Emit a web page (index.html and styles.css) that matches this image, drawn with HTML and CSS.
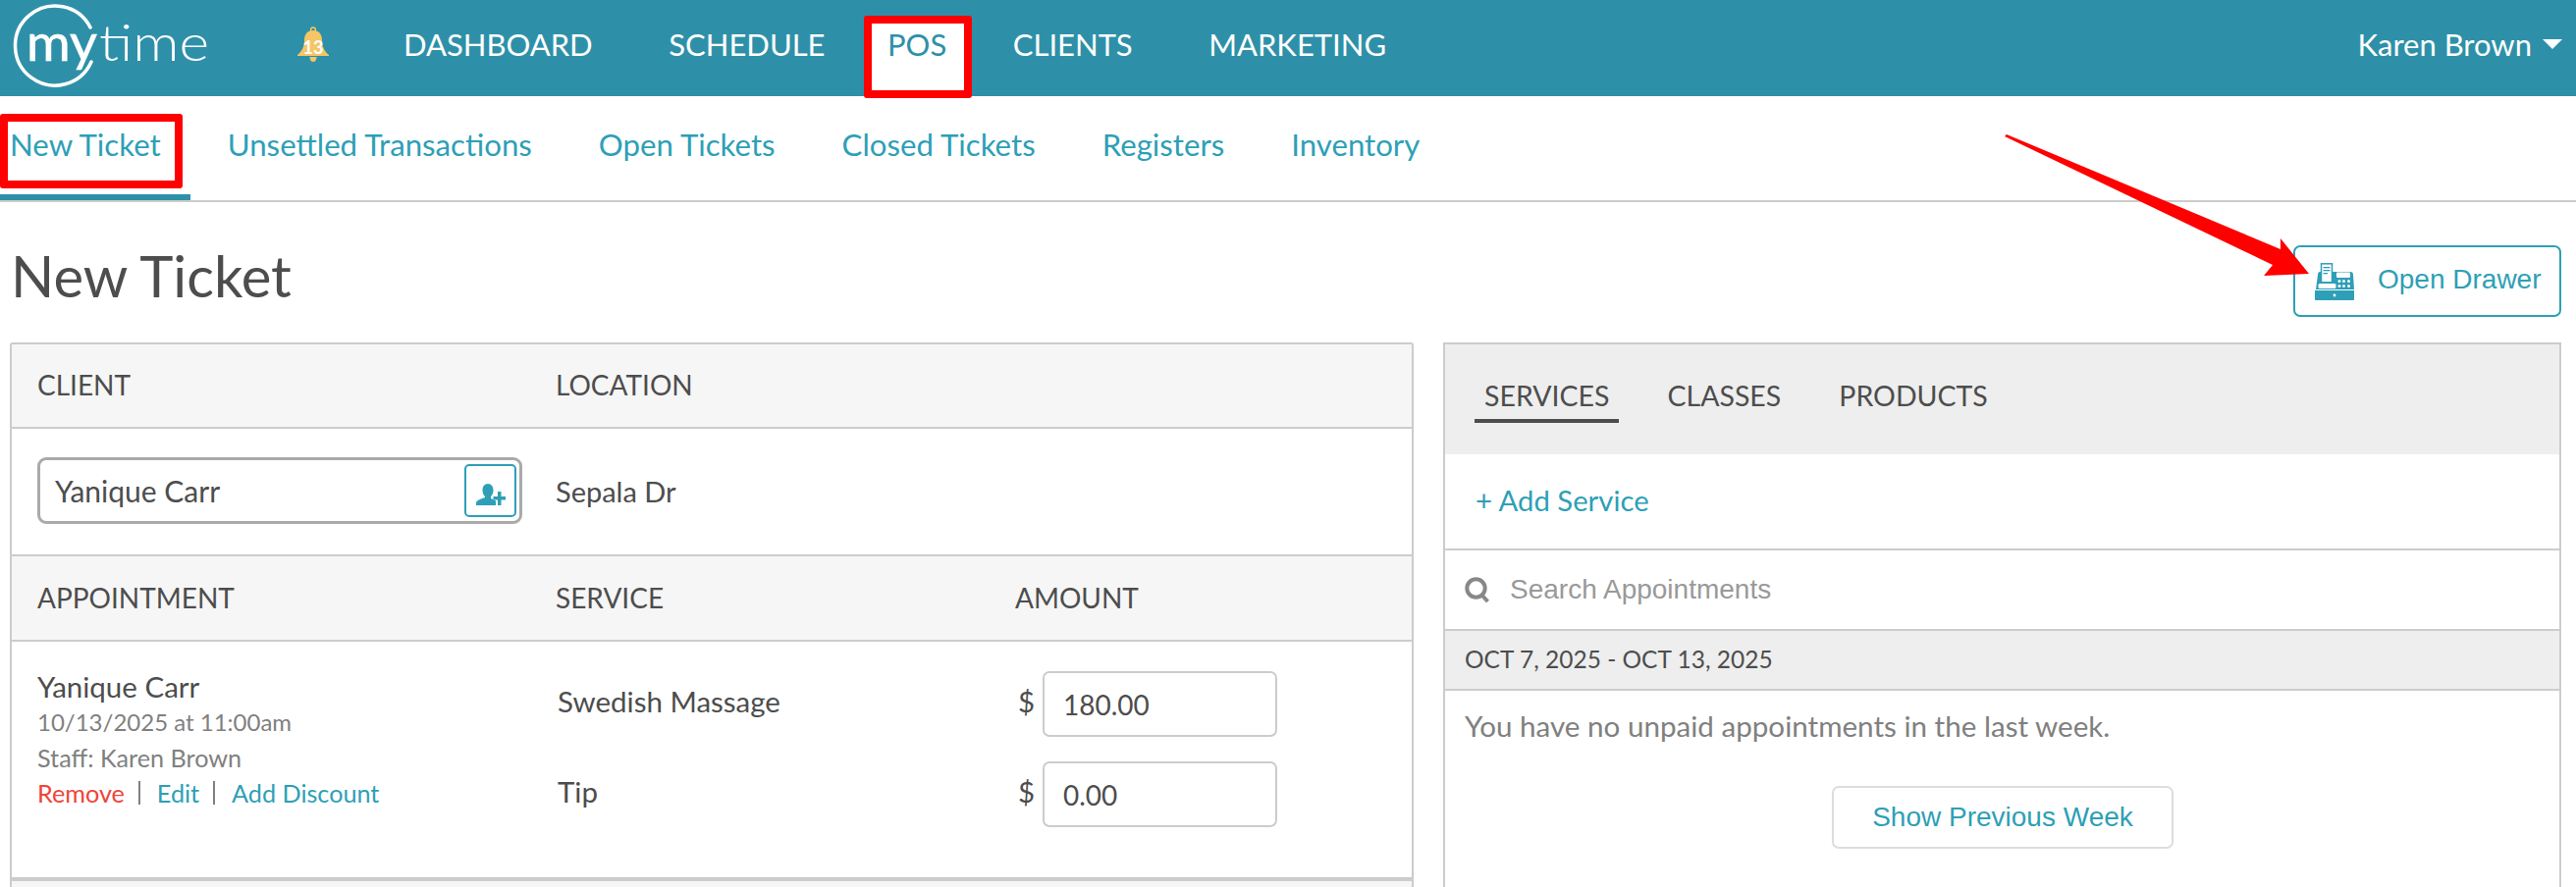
FILE: index.html
```html
<!DOCTYPE html>
<html lang="en">
<head>
<meta charset="utf-8">
<title>New Ticket</title>
<link rel="stylesheet" href="styles.css">
</head>
<body>
<header class="topbar">
  <svg class="logo" viewBox="0 0 216 92" aria-label="mytime">
    <path class="logo-arc" d="M92 25 A40.5 40.5 0 1 0 93 60"/>
    <text class="logo-text logo-my" x="27" y="59" textLength="72" lengthAdjust="spacingAndGlyphs">my</text>
    <text class="logo-text" x="101" y="59" textLength="112" lengthAdjust="spacingAndGlyphs">time</text>
  </svg>
  <div class="bell">
    <svg class="bell-icon" viewBox="0 0 32 36"><circle class="bell-ring" cx="16" cy="3.5" r="2.4"/><path class="bell-body" d="M16 4c6 0 9 4 9 10 0 6 2 11 7 15v1H0v-1c5-4 7-9 7-15C7 8 10 4 16 4z"/><path class="bell-body" d="M12.5 31h7c0 3-1.500 5-3.500 5s-3.500-2-3.500-5z"/></svg>
    <span class="bell-count">13</span>
  </div>
  <nav class="mainnav">
    <a class="mainnav-item">DASHBOARD</a>
    <a class="mainnav-item">SCHEDULE</a>
    <a class="mainnav-item mainnav-active">POS</a>
    <a class="mainnav-item">CLIENTS</a>
    <a class="mainnav-item">MARKETING</a>
  </nav>
  <div class="user">Karen Brown<span class="caret"></span></div>
</header>

<nav class="subnav">
  <a class="subnav-item subnav-active">New Ticket</a>
  <a class="subnav-item">Unsettled Transactions</a>
  <a class="subnav-item">Open Tickets</a>
  <a class="subnav-item">Closed Tickets</a>
  <a class="subnav-item">Registers</a>
  <a class="subnav-item">Inventory</a>
</nav>

<div class="pagehead">
  <h1 class="pagetitle">New Ticket</h1>
  <button class="drawer-btn">
    <svg class="drawer-icon" viewBox="0 0 40 38">
      <path class="teal-fill" d="M5 9h17v-0h14c2 0 3 1 3 3l1 15H1L3 12c0-2 1-3 2-3z"/>
      <rect x="6.500" y="0.800" width="11" height="19" class="paper"/>
      <rect x="8.500" y="4" width="7" height="1.300" class="teal-fill"/>
      <rect x="8.500" y="7" width="7" height="1.300" class="teal-fill"/>
      <rect x="8.500" y="10" width="4.500" height="1.300" class="teal-fill"/>
      <rect x="22" y="9.500" width="14" height="5.500" rx="1" class="white-fill"/>
      <rect x="3.500" y="21" width="18" height="5" rx="1.500" class="white-fill"/>
      <g class="white-fill">
        <circle cx="25" cy="18.500" r="1.500"/><circle cx="29.500" cy="18.500" r="1.500"/><circle cx="34.500" cy="18.500" r="1.500"/>
        <circle cx="25" cy="23.500" r="1.500"/><circle cx="29.500" cy="23.500" r="1.500"/><circle cx="34.500" cy="23.500" r="1.500"/>
      </g>
      <path class="teal-fill" d="M0 28h40v9c0 .6-.4 1-1 1H1c-.6 0-1-.4-1-1z"/>
      <circle cx="20" cy="33" r="1.400" class="white-fill"/>
    </svg>
    <span>Open Drawer</span>
  </button>
</div>

<main class="panels">
  <section class="panel ticket">
    <div class="grid-row head-row">
      <div>CLIENT</div>
      <div>LOCATION</div>
    </div>
    <div class="grid-row client-row">
      <div class="client-field">
        <input class="client-input" value="Yanique Carr">
        <button class="add-client">
          <svg class="add-client-icon" viewBox="0 0 30 22">
            <path class="teal-fill" d="M12 0c3.500 0 5.500 3 5.500 6.500 0 3-1 5-2.500 6.500v2c2 .8 3.500 1.500 5 2.500V22H0v-3c1-2 4-3.500 9-5v-1C7.500 11.500 6.500 9.500 6.500 6.500 6.500 3 8.500 0 12 0z"/>
            <path class="teal-fill" d="M22 8h3.500v5H30v3.500h-4.500V22H22v-5.500h-4.500V13H22z"/>
          </svg>
        </button>
      </div>
      <div class="body-text">Sepala Dr</div>
    </div>
    <div class="grid-row head-row head-row-second">
      <div>APPOINTMENT</div>
      <div>SERVICE</div>
      <div>AMOUNT</div>
    </div>
    <div class="grid-row item-row">
      <div class="appt">
        <div class="appt-name">Yanique Carr</div>
        <div class="appt-date">10/13/2025 at 11:00am</div>
        <div class="appt-staff">Staff: Karen Brown</div>
        <div class="appt-actions"><a class="link-remove">Remove</a><span class="sep"></span><a class="link">Edit</a><span class="sep"></span><a class="link">Add Discount</a></div>
      </div>
      <div class="lines service-lines">
        <div class="line">Swedish Massage</div>
        <div class="line">Tip</div>
      </div>
      <div class="lines">
        <div class="line"><span class="dollar">$</span><input class="amount" value="180.00"></div>
        <div class="line"><span class="dollar">$</span><input class="amount" value="0.00"></div>
      </div>
    </div>
    <div class="ticket-foot"></div>
  </section>

  <section class="panel catalog">
    <div class="tabs">
      <a class="tab tab-active">SERVICES</a>
      <a class="tab">CLASSES</a>
      <a class="tab">PRODUCTS</a>
    </div>
    <div class="add-row"><a class="add-link">+ Add Service</a></div>
    <div class="search-row">
      <svg class="search-icon" viewBox="0 0 26 26"><circle cx="11.500" cy="11.500" r="9.200"/><path d="M17.500 18.500l6 6.500"/></svg>
      <input class="search-input" placeholder="Search Appointments">
    </div>
    <div class="date-row">OCT 7, 2025 - OCT 13, 2025</div>
    <p class="empty">You have no unpaid appointments in the last week.</p>
    <div class="more-wrap"><button class="more-btn">Show Previous Week</button></div>
  </section>
</main>

<div class="mark mark-ticket"></div>
<svg class="arrow" viewBox="0 0 320 150"><polygon points="0,0 2,-2 281,115 281,104 310,140 264,142 273,131" transform="translate(2 3)"/></svg>
</body>
</html>
```
FILE: styles.css
```css
*, *::before, *::after { box-sizing: border-box; }
html, body { margin: 0; height: 904px; overflow: hidden; background: #fff; }
body { font-family: Lato, "Noto Sans", sans-serif; color: #4d4d4d; position: relative; }
a { text-decoration: none; }
input, button { font-family: inherit; color: inherit; background: #fff; margin: 0; outline: none; }

.teal-fill { fill: #2e9fb6; }
.white-fill { fill: #fff; }
.paper { fill: #fff; stroke: #2e9fb6; stroke-width: 1.500; }

/* top bar */
.topbar { height: 98px; background: #2e90a8; display: flex; align-items: center; color: #fff; padding: 0 14px 8px 0; }
.logo { width: 216px; height: 92px; margin-top: 8px; flex: none; }
.logo-arc { fill: none; stroke: #fff; stroke-width: 3.500; stroke-linecap: round; }
.logo-text { fill: #fff; font-family: Lato, sans-serif; font-size: 52px; font-weight: 300; }
.logo-my { font-weight: 400; stroke: #fff; stroke-width: 0.600px; }
.bell { position: relative; width: 32px; height: 36px; margin-left: 87px; flex: none; }
.bell-icon { width: 32px; height: 36px; display: block; }
.bell-ring { fill: none; stroke: #f5c566; stroke-width: 1.500; }
.bell-body { fill: #f5c566; }
.bell-count { position: absolute; left: 0; right: 0; top: 11px; text-align: center; font-size: 18px; line-height: 20px; font-weight: 700; color: #fff; }
.mainnav { display: flex; gap: 77.500px; margin-left: 76px; }
.mainnav-item { font-size: 31px; line-height: 40px; color: #fff; white-space: nowrap; }
.mainnav-active { position: relative; z-index: 0; color: #2e90a8; margin: 0 -10px 0 -14px; }
.mainnav-active::before { content: ""; position: absolute; z-index: -1; left: -24px; top: -9px; width: 110px; height: 84px; background: #fff; border: 8px solid #f00; border-radius: 3px; }
.user { margin-left: auto; display: flex; align-items: center; font-size: 31px; line-height: 40px; }
.caret { width: 0; height: 0; border-left: 10px solid transparent; border-right: 10px solid transparent; border-top: 10px solid #fff; margin-left: 11px; }

/* sub nav */
.subnav { height: 108px; border-bottom: 2px solid #ccc; display: flex; }
.subnav-item { font-size: 31.200px; line-height: 36px; color: #2e9fb6; padding: 31px 34px 0; height: 106px; white-space: nowrap; }
.subnav-active { padding: 31px 30px 0 10px; margin-right: 4px; height: 106px; border-bottom: 6px solid #2e90a8; }

/* title */
.pagehead { height: 143px; display: flex; justify-content: space-between; align-items: flex-start; padding: 0 15px 0 11px; }
.pagetitle { margin: 39px 0 0; font-size: 58px; line-height: 72px; font-weight: 400; color: #4d4d4d; }
.drawer-btn { margin-top: 44px; width: 273px; height: 73px; border: 2px solid #2e9fb6; border-radius: 7px; display: flex; align-items: center; padding: 0 0 3px 20px; color: #2e9fb6; font-family: "Liberation Sans", Arial, sans-serif; font-size: 28px; }
.drawer-icon { width: 40px; height: 38px; margin-right: 24px; flex: none; margin-top: 3px; }

/* panels */
.panels { display: grid; grid-template-columns: 1430px 1139px; gap: 30px; padding-left: 10px; align-items: start; }
.panel { border: 2px solid #ccc; border-bottom: 0; height: 600px; }
.ticket { background: #f6f6f6; border-radius: 3px 3px 0 0; }
.catalog { background: #fff; }

.grid-row { display: grid; grid-template-columns: 528px 468px 1fr; padding-left: 26px; border-bottom: 2px solid #ccc; background: #fff; }
.head-row { height: 86px; background: #f6f6f6; align-items: center; font-size: 28px; line-height: 36px; padding-bottom: 3px; }
.head-row-second { height: 87px; padding-bottom: 2px; }
.client-row { height: 130px; align-items: center; }
.body-text { font-size: 29px; padding-bottom: 2px; }
.client-field { width: 494px; height: 68px; border: 3px solid #aaa; border-radius: 9px; display: flex; align-items: center; padding: 0 3px 0 15px; margin-top: -2px; }
.client-input { flex: 1; min-width: 0; border: 0; padding: 0; font-size: 30px; color: #4d4d4d; }
.add-client { width: 53px; height: 54px; border: 2px solid #2e9fb6; border-radius: 5px; padding: 0; display: flex; align-items: center; justify-content: center; flex: none; }
.add-client-icon { width: 30px; height: 22px; margin-top: 8px; }

.item-row { height: 244px; border-bottom-width: 4px; padding-top: 30px; align-items: start; }
.appt-name { font-size: 29.500px; line-height: 36px; margin: -2px 0 0; }
.appt-date { font-size: 24px; line-height: 36px; color: #808080; }
.appt-staff { font-size: 25.200px; line-height: 36px; color: #808080; }
.appt-actions { font-size: 25.200px; line-height: 36px; display: flex; align-items: center; }
.link-remove { color: #ef4438; }
.link { color: #2e9fb6; }
.sep { width: 2px; height: 24px; background: #808080; margin: 0 17px 0 14px; }
.lines { display: flex; flex-direction: column; gap: 25px; }
.service-lines { padding-left: 2px; }
.line { height: 67px; display: flex; align-items: center; font-size: 29.500px; padding-bottom: 7px; }
.dollar { width: 25px; margin-left: 3px; flex: none; }
.amount { width: 239px; height: 67px; flex: none; border: 2px solid #ccc; border-radius: 7px; padding: 0 0 0 19px; font-size: 28px; color: #4d4d4d; margin-top: 7px; }
.ticket-foot { height: 20px; }

/* catalog */
.tabs { height: 112px; background: #eee; display: flex; padding: 26px 0 0 30px; gap: 39px; }
.tab { font-size: 28.500px; line-height: 52px; height: 54px; padding: 0 10px; color: #4d4d4d; }
.tab-active { border-bottom: 4px solid #4d4d4d; padding: 0 10px; }
.add-row { height: 98px; border-bottom: 2px solid #ccc; display: flex; align-items: center; padding-left: 31px; padding-bottom: 4px; }
.add-link { color: #2e9fb6; font-size: 29.300px; }
.search-row { height: 82px; border-bottom: 2px solid #ccc; display: flex; align-items: center; padding-left: 20px; }
.search-icon { width: 26px; height: 26px; fill: none; stroke: #888; stroke-width: 4; flex: none; }
.search-input { flex: 1; border: 0; padding: 0; margin-left: 20px; font-family: "Liberation Sans", Arial, sans-serif; font-size: 28px; }
.search-input::placeholder { color: #999; opacity: 1; }
.date-row { height: 61px; background: #eee; border-bottom: 2px solid #ccc; display: flex; align-items: center; padding-left: 20px; padding-bottom: 2px; font-size: 24.500px; }
.empty { margin: 16px 0 0 20px; font-size: 29.600px; line-height: 40px; color: #808080; }
.more-wrap { display: flex; padding: 41px 0 0 394px; }
.more-btn { width: 348px; height: 64px; border: 2px solid #ddd; border-radius: 7px; color: #2e9fb6; font-family: "Liberation Sans", Arial, sans-serif; font-size: 28px; padding: 0; }

/* annotations */
.mark { position: absolute; border: 8px solid #f00; border-radius: 3px; }
.mark-ticket { left: 0; top: 116px; width: 186px; height: 76px; }
.arrow { position: absolute; left: 2040px; top: 136px; width: 320px; height: 150px; overflow: visible; fill: #f00; }
```
